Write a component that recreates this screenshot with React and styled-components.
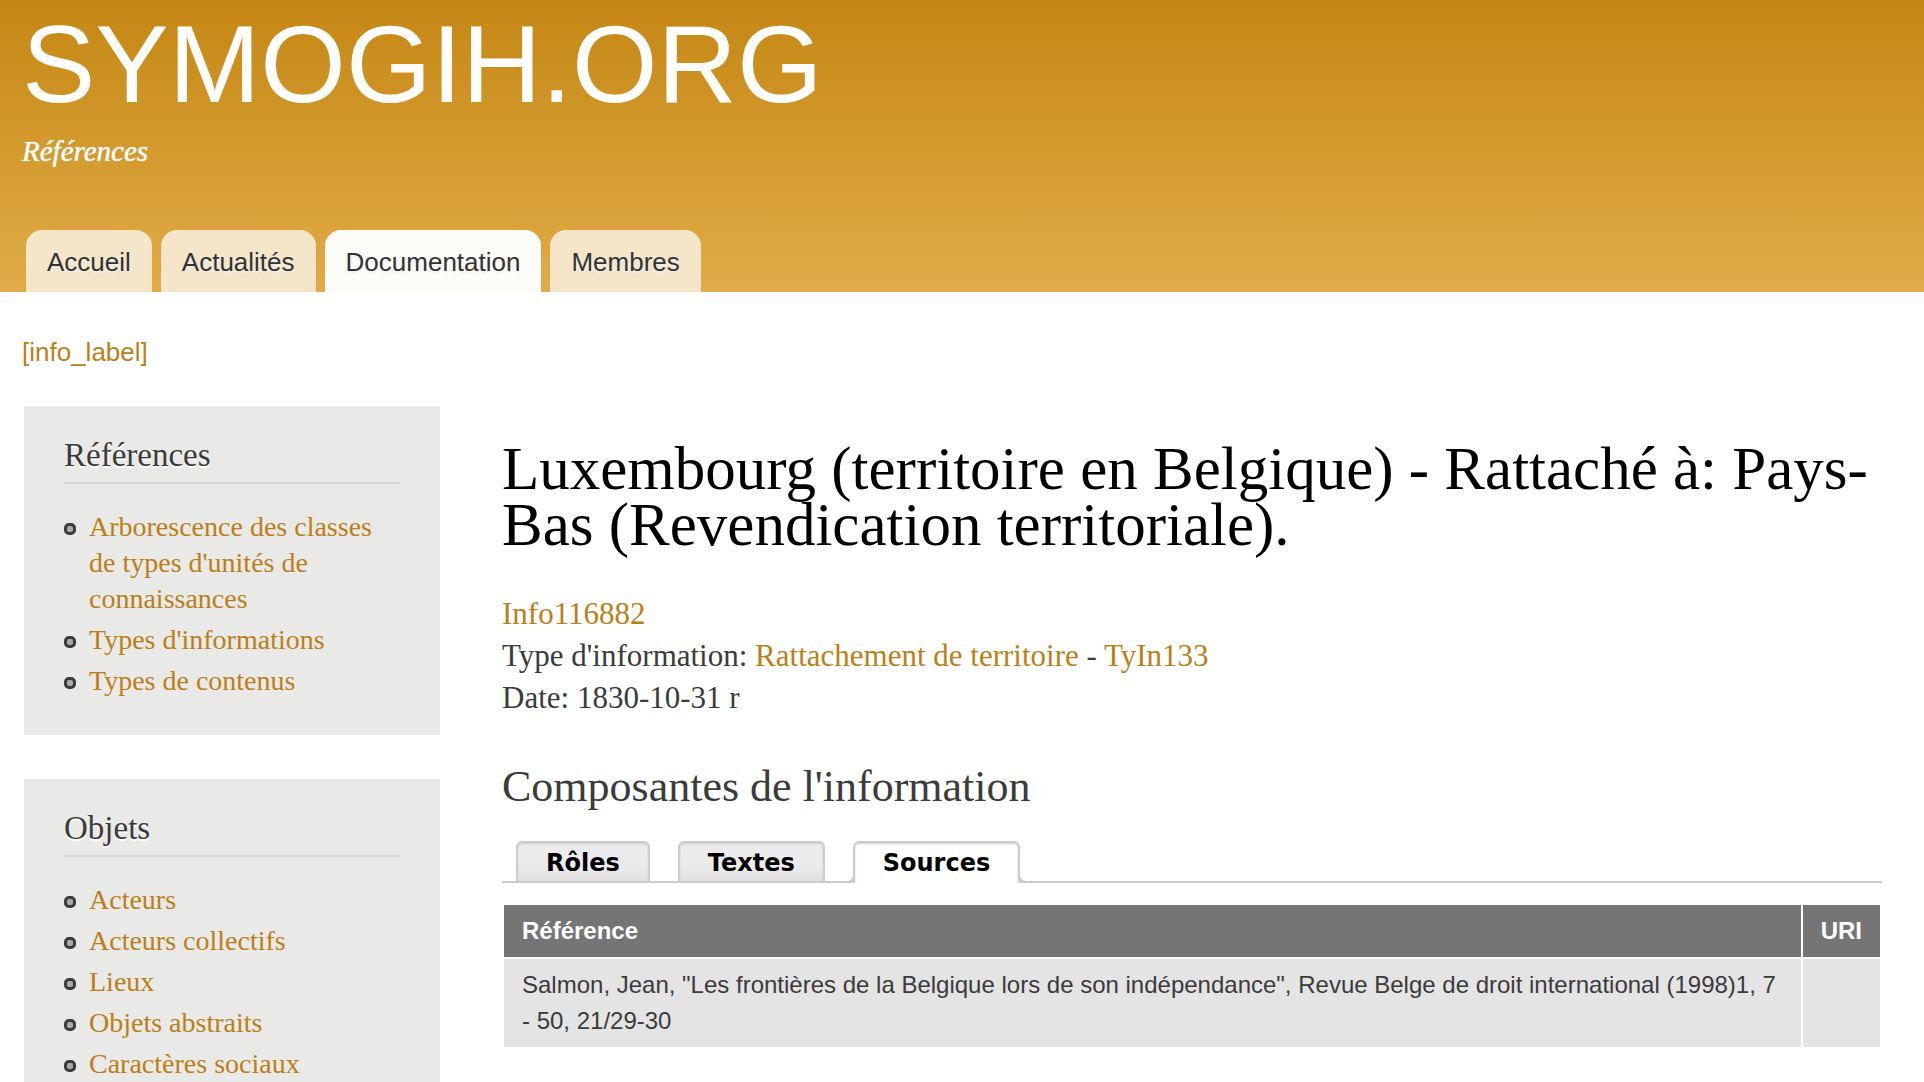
import React from 'react';
import styled, { createGlobalStyle, css } from 'styled-components';

const sans = '"Liberation Sans", Arial, sans-serif';
const serif = '"Liberation Serif", Georgia, serif';
const tabFont = '"DejaVu Sans", Verdana, sans-serif';

const GlobalStyle = createGlobalStyle`
  *, *::before, *::after { box-sizing: border-box; }
  html { overflow: hidden; }
  body {
    margin: 0;
    height: 100vh;
    overflow: hidden;
    background: #fff;
    color: #3b3b3b;
    font-family: ${serif};
  }
`;

const Header = styled.header`
  display: flex;
  flex-direction: column;
  height: 292px;
  padding: 0 22px;
  background: linear-gradient(to bottom, #c58714, #e1ac47);
`;

const SiteName = styled.a`
  align-self: flex-start;
  color: #fffefd;
  font: 110px/128px ${sans};
  text-decoration: none;
`;

const Slogan = styled.div`
  color: #fffefd;
  font: italic 29px/36px ${serif};
  text-shadow: 0 0 1px #fffefd;
  margin-top: 5px;
`;

const MainMenu = styled.nav`
  display: flex;
  gap: 9px;
  margin-top: auto;
  padding-left: 4px;
`;

const MenuTab = styled.a`
  height: 62px;
  padding: 0 21px;
  border-radius: 16px 16px 0 0;
  background: ${({ $active }) => ($active ? '#fdfcf9' : '#f5e6c9')};
  color: #333;
  font: 26px/64px ${sans};
  text-decoration: none;
  text-shadow: 0 2px 2px #eee;
`;

const Breadcrumb = styled.nav`
  padding: 42px 22px 36px;
  font: 26px/36px ${sans};
`;

const Link = styled.a`
  color: #bb7f18;
  text-decoration: none;
`;

const Columns = styled.div`
  display: grid;
  grid-template-columns: 416px minmax(0, 1fr);
  gap: 62px;
  padding: 0 42px 0 24px;
`;

const Sidebar = styled.aside`
  display: flex;
  flex-direction: column;
  gap: 44px;
`;

const Block = styled.section`
  padding: 28px 40px 36px;
  background: #e9e9e7;
`;

const BlockTitle = styled.h2`
  margin: 0 0 25px;
  padding-bottom: 6px;
  border-bottom: 2px solid #d5d5d3;
  font: 33px/42px ${serif};
  text-shadow: 0 2px 0 #fff;
`;

const LinkList = styled.ul`
  display: flex;
  flex-direction: column;
  gap: 5px;
  margin: 0;
  padding: 0;
  list-style: none;
`;

const ListItem = styled.li`
  display: flex;
  gap: 13px;
  font: 28px/36px ${serif};

  &::before {
    content: '';
    flex: none;
    width: 12px;
    height: 12px;
    margin-top: 14px;
    border: 3px solid #3b3b3b;
    border-radius: 5px;
    background: #aaa;
  }
`;

const Main = styled.main`
  padding-top: 35px;
`;

const PageTitle = styled.h1`
  margin: 0;
  color: #000;
  font: 61px/56px ${serif};
`;

const Details = styled.div`
  margin-top: 40px;
  font: 31px/42px ${serif};
`;

const SectionTitle = styled.h2`
  margin: 40px 0 0;
  font: 44px/56px ${serif};
`;

const TabBar = styled.div`
  display: flex;
  gap: 28px;
  margin-top: 26px;
  padding-left: 14px;
  border-bottom: 2px solid #ccc;
`;

const activeTabStyle = css`
  height: 42px;
  margin: 0 0 -2px;
  background: #fff;

  &::before,
  &::after {
    content: '';
    position: absolute;
    bottom: 0;
    width: 8px;
    height: 8px;
    border-bottom: 2px solid #ccc;
    background: #fff;
  }

  &::before {
    left: -8px;
    border-right: 2px solid #ccc;
    border-bottom-right-radius: 8px;
  }

  &::after {
    right: -8px;
    border-left: 2px solid #ccc;
    border-bottom-left-radius: 8px;
  }
`;

const TabButton = styled.button`
  position: relative;
  height: 40px;
  margin: 0;
  padding: 0 28px;
  border: 2px solid #ccc;
  border-bottom: 0;
  border-radius: 6px 6px 0 0;
  background: linear-gradient(#ebebeb 60%, #e0e0e0);
  box-shadow: inset 0 1px 2px #ccc;
  color: #000;
  font: bold 24px/40px ${tabFont};

  ${({ $active }) => $active && activeTabStyle}
`;

const SourceTable = styled.table`
  width: 100%;
  margin-top: 20px;
  border-collapse: separate;
  border-spacing: 2px;
  font: 24px/36px ${sans};
`;

const HeadCell = styled.th`
  padding: 8px 18px;
  background: #757575;
  color: #fff;
  text-align: left;
`;

const Cell = styled.td`
  padding: 8px 18px;
  background: #e4e4e4;
  vertical-align: top;
`;

const references = [
  "Arborescence des classes de types d'unités de connaissances",
  "Types d'informations",
  'Types de contenus',
];

const objects = ['Acteurs', 'Acteurs collectifs', 'Lieux', 'Objets abstraits', 'Caractères sociaux'];

const menu = ['Accueil', 'Actualités', 'Documentation', 'Membres'];

const tabs = ['Rôles', 'Textes', 'Sources'];

function SidebarBlock({ title, items }) {
  return (
    <Block>
      <BlockTitle>{title}</BlockTitle>
      <LinkList>
        {items.map((item) => (
          <ListItem key={item}>
            <Link href="#">{item}</Link>
          </ListItem>
        ))}
      </LinkList>
    </Block>
  );
}

export default function App() {
  const [activeTab, setActiveTab] = React.useState('Sources');

  return (
    <>
      <GlobalStyle />
      <Header>
        <SiteName href="#">SYMOGIH.ORG</SiteName>
        <Slogan>Références</Slogan>
        <MainMenu>
          {menu.map((item) => (
            <MenuTab key={item} href="#" $active={item === 'Documentation'}>
              {item}
            </MenuTab>
          ))}
        </MainMenu>
      </Header>
      <Breadcrumb>
        <Link href="#">[info_label]</Link>
      </Breadcrumb>
      <Columns>
        <Sidebar>
          <SidebarBlock title="Références" items={references} />
          <SidebarBlock title="Objets" items={objects} />
        </Sidebar>
        <Main>
          <PageTitle>
            Luxembourg (territoire en Belgique) - Rattaché à: Pays-Bas (Revendication territoriale).
          </PageTitle>
          <Details>
            <div>
              <Link href="#">Info116882</Link>
            </div>
            <div>
              Type d'information: <Link href="#">Rattachement de territoire</Link> -{' '}
              <Link href="#">TyIn133</Link>
            </div>
            <div>Date: 1830-10-31 r</div>
          </Details>
          <SectionTitle>Composantes de l'information</SectionTitle>
          <TabBar role="tablist">
            {tabs.map((tab) => (
              <TabButton
                key={tab}
                type="button"
                role="tab"
                aria-selected={tab === activeTab}
                $active={tab === activeTab}
                onClick={() => setActiveTab(tab)}
              >
                {tab}
              </TabButton>
            ))}
          </TabBar>
          <SourceTable>
            <thead>
              <tr>
                <HeadCell>Référence</HeadCell>
                <HeadCell>URI</HeadCell>
              </tr>
            </thead>
            <tbody>
              <tr>
                <Cell>
                  Salmon, Jean, "Les frontières de la Belgique lors de son indépendance", Revue Belge de
                  droit international (1998)1, 7 - 50, 21/29-30
                </Cell>
                <Cell />
              </tr>
            </tbody>
          </SourceTable>
        </Main>
      </Columns>
    </>
  );
}
